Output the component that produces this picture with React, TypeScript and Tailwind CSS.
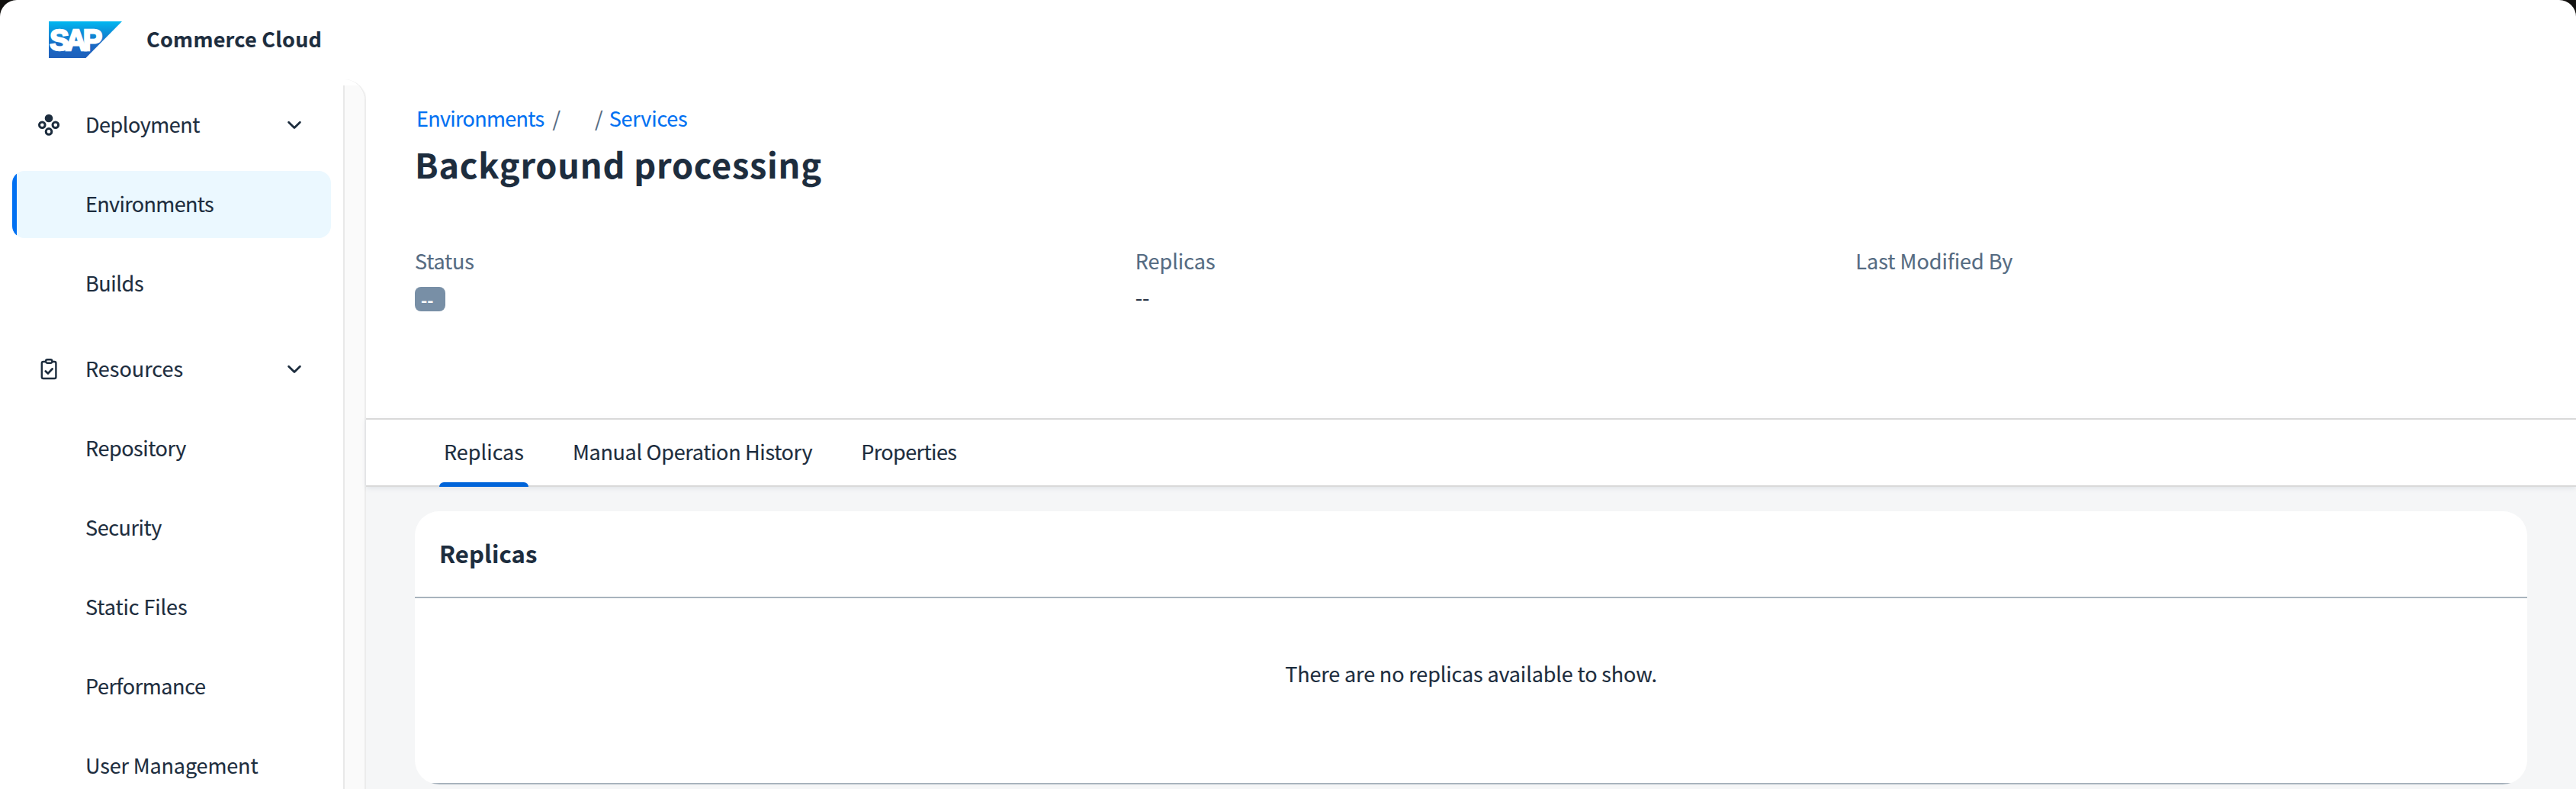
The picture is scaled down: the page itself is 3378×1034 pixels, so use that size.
interface NavItem {
  label: string
  tracking: string
  active?: boolean
}

interface NavGroup {
  label: string
  tracking: string
  icon: 'deployment' | 'resources'
  items: NavItem[]
}

const navGroups: NavGroup[] = [
  {
    label: 'Deployment',
    tracking: 'tracking-[-0.5px]',
    icon: 'deployment',
    items: [
      { label: 'Environments', tracking: 'tracking-[-0.65px]', active: true },
      { label: 'Builds', tracking: 'tracking-[-0.4px]' },
    ],
  },
  {
    label: 'Resources',
    tracking: 'tracking-normal',
    icon: 'resources',
    items: [
      { label: 'Repository', tracking: 'tracking-[-0.45px]' },
      { label: 'Security', tracking: 'tracking-[-0.45px]' },
      { label: 'Static Files', tracking: 'tracking-[-0.1px]' },
      { label: 'Performance', tracking: 'tracking-[-0.4px]' },
      { label: 'User Management', tracking: 'tracking-[-0.15px]' },
    ],
  },
]

const tabs = [
  { label: 'Replicas', tracking: 'tracking-normal' },
  { label: 'Manual Operation History', tracking: 'tracking-[-0.33px]' },
  { label: 'Properties', tracking: 'tracking-[-0.6px]' },
]

const SapLogo = () => (
  <svg width="96" height="48" viewBox="0 0 96 48">
    <defs>
      <linearGradient id="sap" x1="0" y1="0" x2="0" y2="1">
        <stop offset="0" stopColor="#00b8f1" />
        <stop offset="0.3" stopColor="#0d90d9" />
        <stop offset="0.65" stopColor="#1a6ac4" />
        <stop offset="1" stopColor="#1e5fbb" />
      </linearGradient>
    </defs>
    <path d="M0 0h96L48.5 48H0z" fill="url(#sap)" />
    <text
      x="1.2"
      y="37.8"
      textLength="69"
      lengthAdjust="spacing"
      fontFamily="Liberation Sans, sans-serif"
      fontWeight="700"
      fontSize="38"
      fill="#fff"
      stroke="#fff"
      strokeWidth="2.4"
    >
      SAP
    </text>
  </svg>
)

const DeploymentIcon = () => (
  <svg width="32" height="32" viewBox="0 0 32 32" fill="none" stroke="#1d2d3e" strokeWidth="3">
    <circle cx="16" cy="7" r="5.3" fill="#1d2d3e" stroke="none" />
    <circle cx="7.3" cy="15.8" r="3.8" />
    <circle cx="24.8" cy="15.8" r="3.8" />
    <circle cx="16" cy="24.4" r="3.8" />
  </svg>
)

const ResourcesIcon = () => (
  <svg
    width="32"
    height="32"
    viewBox="0 0 32 32"
    fill="none"
    stroke="#1d2d3e"
    strokeWidth="2.4"
    strokeLinecap="round"
    strokeLinejoin="round"
  >
    <rect x="6.8" y="6" width="18.6" height="22" rx="2" />
    <rect x="12" y="3.2" width="8.4" height="4.6" rx="2.2" fill="#fff" />
    <path d="M11.8 18.4l3.2 3 5.6-6" strokeWidth="2.8" />
  </svg>
)

const Chevron = () => (
  <svg
    width="20"
    height="12"
    viewBox="0 0 20 12"
    fill="none"
    stroke="#1d2d3e"
    strokeWidth="2.8"
    strokeLinecap="round"
    strokeLinejoin="round"
  >
    <path d="M2.6 2.2L10 9.4l7.4-7.2" />
  </svg>
)

const Sidebar = () => (
  <aside className="flex w-[480px] shrink-0 overflow-hidden rounded-tr-[28px] border-r-2 border-[#ececec] pt-2 shadow-[2px_1px_2px_-1px_rgba(0,0,0,0.06)]">
    <nav className="flex w-[450px] shrink-0 flex-col gap-6 pt-2">
      {navGroups.map((group) => (
        <div key={group.label} className="flex shrink-0 flex-col gap-4 px-4">
          <div className="flex h-[88px] shrink-0 items-center pr-[38px] pl-8">
            {group.icon === 'deployment' ? <DeploymentIcon /> : <ResourcesIcon />}
            <span className={`flex-1 pb-[3px] pl-8 ${group.tracking}`}>{group.label}</span>
            <Chevron />
          </div>
          {group.items.map((item) => (
            <div
              key={item.label}
              className={`flex h-[88px] w-[418px] shrink-0 items-center overflow-hidden rounded-2xl ${
                item.active ? 'bg-[#ebf8ff]' : ''
              }`}
            >
              <div className={`h-full w-1.5 ${item.active ? 'bg-[#0070f2]' : ''}`} />
              <span className={`pb-[3px] pl-[90px] ${item.tracking}`}>{item.label}</span>
            </div>
          ))}
        </div>
      ))}
    </nav>
    <div className="flex-1 border-l-2 border-[#e8e8e8] bg-[#fafafa]" />
  </aside>
)

const ObjectHeader = () => (
  <section className="h-[444px] shrink-0 bg-white px-16 pt-[31px]">
    <div className="flex h-10 items-center text-[#556b82]">
      <a className="pl-0.5 tracking-[-0.7px] text-[#0070f2]">Environments</a>
      <span className="ml-[11px]">/</span>
      <span className="ml-[45px]">/</span>
      <a className="ml-2 tracking-[-0.2px] text-[#0070f2]">Services</a>
    </div>
    <h1 className="mt-3 text-[45px] leading-[56px] font-bold tracking-[0.8px]">Background processing</h1>
    <div className="mt-[79px] grid grid-cols-3 gap-x-16">
      <div>
        <p className="tracking-[-0.2px] text-[#556b82]">Status</p>
        <span className="mt-3.5 flex h-8 w-10 items-center rounded-lg bg-[#788fa6] pl-2 text-[22px] leading-8 font-bold text-white">
          --
        </span>
      </div>
      <div>
        <p className="text-[#556b82]">Replicas</p>
        <p className="mt-3 leading-8">--</p>
      </div>
      <div>
        <p className="text-[#556b82]">Last Modified By</p>
      </div>
    </div>
  </section>
)

const TabBar = () => (
  <div className="z-10 flex h-[90px] shrink-0 border-y-2 border-[#d9d9d9] bg-white pl-24 shadow-[0_2px_6px_rgba(85,107,130,0.12)]">
    {tabs.map((tab, i) => (
      <div key={tab.label} className={`relative flex items-center px-1.5 pb-0.5 ${i > 0 ? 'ml-[52px]' : ''}`}>
        <span className={tab.tracking}>{tab.label}</span>
        {i === 0 && <div className="absolute -bottom-0.5 left-0 h-1.5 w-[117px] rounded-t-md bg-[#0064d9]" />}
      </div>
    ))}
  </div>
)

const ReplicasCard = () => (
  <section className="mx-16 mt-8 flex h-[358px] shrink-0 flex-col overflow-hidden rounded-[32px] bg-white">
    <div className="flex h-[114px] items-center border-b-2 border-[#a8b3bd] pb-0.5 pl-8">
      <h2 className="text-[31px] font-bold tracking-[0.1px]">Replicas</h2>
    </div>
    <div className="flex-1 border-b-2 border-[#a8b3bd] pt-[79px] text-center">
      <p className="tracking-[-0.14px]">There are no replicas available to show.</p>
    </div>
  </section>
)

const App = () => {
  return (
    <div className="h-[1034px] overflow-hidden bg-[#12110f] font-['Noto_Sans_CJK_JP','Noto_Sans',sans-serif] text-[27px] leading-10 text-[#1d2d3e] [-webkit-text-stroke:0.15px]">
      <div className="flex h-full flex-col overflow-hidden rounded-t-[22px] bg-white">
        <header className="flex h-[104px] shrink-0 items-center pl-16">
          <SapLogo />
          <span className="pb-[3px] pl-8 font-bold tracking-[0.25px]">Commerce Cloud</span>
        </header>
        <div className="flex min-h-0 flex-1">
          <Sidebar />
          <main className="flex min-w-0 flex-1 flex-col bg-[#f5f6f7]">
            <ObjectHeader />
            <TabBar />
            <ReplicasCard />
          </main>
        </div>
      </div>
    </div>
  )
}

export default App
